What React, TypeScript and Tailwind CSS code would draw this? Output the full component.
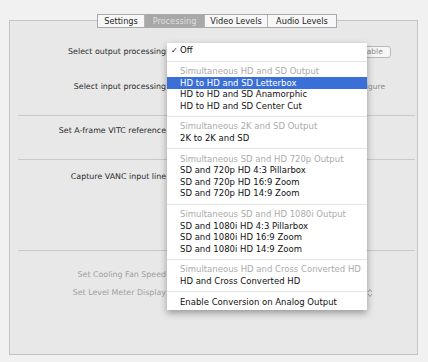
import React from "react";

const font = { fontFamily: '"DejaVu Sans", "Liberation Sans", sans-serif' };

type Entry =
  | { kind: "item"; text: string; check?: boolean; active?: boolean }
  | { kind: "head"; text: string }
  | { kind: "sep" };

const entries: Entry[] = [
  { kind: "item", text: "Off", check: true },
  { kind: "sep" },
  { kind: "head", text: "Simultaneous HD and SD Output" },
  { kind: "item", text: "HD to HD and SD Letterbox", active: true },
  { kind: "item", text: "HD to HD and SD Anamorphic" },
  { kind: "item", text: "HD to HD and SD Center Cut" },
  { kind: "sep" },
  { kind: "head", text: "Simultaneous 2K and SD Output" },
  { kind: "item", text: "2K to 2K and SD" },
  { kind: "sep" },
  { kind: "head", text: "Simultaneous SD and HD 720p Output" },
  { kind: "item", text: "SD and 720p HD 4:3 Pillarbox" },
  { kind: "item", text: "SD and 720p HD 16:9 Zoom" },
  { kind: "item", text: "SD and 720p HD 14:9 Zoom" },
  { kind: "sep" },
  { kind: "head", text: "Simultaneous SD and HD 1080i Output" },
  { kind: "item", text: "SD and 1080i HD 4:3 Pillarbox" },
  { kind: "item", text: "SD and 1080i HD 16:9 Zoom" },
  { kind: "item", text: "SD and 1080i HD 14:9 Zoom" },
  { kind: "sep" },
  { kind: "head", text: "Simultaneous HD and Cross Converted HD" },
  { kind: "item", text: "HD and Cross Converted HD" },
  { kind: "sep" },
  { kind: "item", text: "Enable Conversion on Analog Output" },
];

const tabs = ["Settings", "Processing", "Video Levels", "Audio Levels"];

function Label({ text, dim }: { text: string; dim?: boolean }) {
  return (
    <div
      className={
        "w-[156px] shrink-0 text-right text-[7.9px] leading-none " +
        (dim ? "text-[#a0a0a0]" : "text-[#2a2a2a]")
      }
    >
      {text}
    </div>
  );
}

function Menu() {
  return (
    <div className="absolute left-[167px] top-[43px] w-[200px] bg-white pt-[2px] pb-[2px] shadow-[0_3px_7px_rgba(0,0,0,0.35)] text-[8.5px]">
      {entries.map((e, i) => {
        if (e.kind === "sep")
          return (
            <div key={i} className="h-[9px] flex items-center">
              <div className="h-px w-full bg-[#e4e4e4]" />
            </div>
          );
        if (e.kind === "head")
          return (
            <div key={i} className="h-[11.6px] flex items-center pl-[13px] text-[#ababab]">
              {e.text}
            </div>
          );
        return (
          <div
            key={i}
            className={
              "h-[11.6px] flex items-center pl-[13px] relative " +
              (e.active ? "bg-[#3a6fd8] text-white" : "text-[#111]")
            }
          >
            {e.check && <span className="absolute left-[4px] text-[8px]">✓</span>}
            {e.text}
          </div>
        );
      })}
    </div>
  );
}

export default function App() {
  return (
    <div className="w-[428px] h-[362px] bg-[#f1f1f1] pt-[20px] pl-[9px] relative overflow-hidden" style={font}>
      <div className="w-[409px] h-[335px] border border-[#c4c4c4] bg-[#e8e8e8] relative">
        {/* tab strip sits on the top border */}
        <div className="absolute left-[87px] top-[-7px] flex h-[14px] border border-[#a9a9a9] bg-[#f7f7f7] text-[8.2px] text-[#1e1e1e]">
          {tabs.map((t, i) => (
            <div
              key={t}
              className={
                "h-full flex items-center justify-center " +
                (i > 0 ? "border-l border-[#b5b5b5] " : "") +
                (i === 0
                  ? "w-[46px]"
                  : i === 1
                  ? "w-[60px] bg-[#a8a8a8] text-[#dedede]"
                  : i === 2
                  ? "w-[63px]"
                  : "w-[69px]")
              }
            >
              {t}
            </div>
          ))}
        </div>

        {/* section 1 */}
        <div className="h-[94px] pt-[21px] flex flex-col gap-[15px]">
          <div className="h-[20px] flex items-center">
            <Label text="Select output processing" />
            <div className="ml-auto mr-[26px] h-[12px] w-[42px] rounded-[3px] border border-[#b8b8b8] bg-[#f6f6f6] text-[7.5px] text-[#8a8a8a] flex items-center justify-center">
              Enable
            </div>
          </div>
          <div className="h-[20px] flex items-center">
            <Label text="Select input processing" />
            <div className="ml-auto mr-[32px] text-[7.5px] text-[#8a8a8a]">Configure</div>
          </div>
        </div>
        <div className="h-px bg-[#c9c9c9] ml-[8px] mr-[2px]" />

        {/* section 2 */}
        <div className="h-[43px] pt-[5px]">
          <div className="h-[20px] flex items-center">
            <Label text="Set A-frame VITC reference" />
          </div>
        </div>
        <div className="h-px bg-[#c9c9c9] ml-[8px] mr-[2px]" />

        {/* section 3 */}
        <div className="h-[90px] pt-[7px]">
          <div className="h-[20px] flex items-center">
            <Label text="Capture VANC input line" />
          </div>
        </div>
        <div className="h-px bg-[#c9c9c9] ml-[8px] mr-[2px]" />

        {/* section 4 */}
        <div className="pt-[16px] flex flex-col gap-[2px]">
          <div className="h-[16px] flex items-center">
            <Label text="Set Cooling Fan Speed" dim />
          </div>
          <div className="h-[16px] flex items-center">
            <Label text="Set Level Meter Display" dim />
            <svg className="ml-[201px]" width="6" height="10" viewBox="0 0 6 10">
              <path d="M1 4 L3 1.5 L5 4 M1 6 L3 8.5 L5 6" fill="none" stroke="#a0a0a0" strokeWidth="1" />
            </svg>
          </div>
        </div>
      </div>
      <Menu />
    </div>
  );
}
